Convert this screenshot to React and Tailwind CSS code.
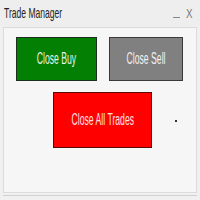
export default function App() {
  const label = 'inline-block whitespace-nowrap scale-x-[0.54] origin-center'
  return (
    <div
      className="w-[200px] h-[200px] bg-[#f0f0f0] relative overflow-hidden"
      style={{ fontFamily: '"Liberation Sans", Arial, sans-serif' }}
    >
      <div className="h-[27px] flex items-center justify-between pl-[4px] pr-[6px] bg-[#eeeeee]">
        <span className="inline-block whitespace-nowrap text-[15px] text-[#222] scale-x-[0.57] origin-left">
          Trade Manager
        </span>
        <div className="flex items-end gap-[5px] text-[#777] text-[13px]">
          <span className="inline-block w-[7px] h-[1px] bg-[#888] mb-[2px]" />
          <span className="leading-none inline-block scale-x-[0.75]">X</span>
        </div>
      </div>
      <div className="mx-[3px] h-[166px] border border-[#dcdcdc] bg-[#f6f6f6] relative">
        <div className="flex pt-[9px] pl-[12px] gap-[12px]">
          <button className="w-[81px] h-[44px] flex items-center justify-center bg-[#037f03] border border-[#1c2e1c] text-[#e8f4e8] text-[16px]">
            <span className={label}>Close Buy</span>
          </button>
          <button className="w-[74px] h-[44px] flex items-center justify-center bg-[#808080] border border-[#3a3a3a] text-[#f2f2f2] text-[16px]">
            <span className={label}>Close Sell</span>
          </button>
        </div>
        <div className="flex pt-[11px] pl-[49px]">
          <button className="w-[99px] h-[56px] flex items-center justify-center bg-[#ff0000] border border-[#5a0a0a] text-[#ffe0e0] text-[16px]">
            <span className={label}>Close All Trades</span>
          </button>
        </div>
        <div className="absolute left-[171px] top-[92px] w-[2px] h-[2px] bg-[#333]" />
      </div>
      <div className="mx-[3px] mt-[1px] h-[2px] border-b border-[#d0d0d0]" />
    </div>
  );
}
